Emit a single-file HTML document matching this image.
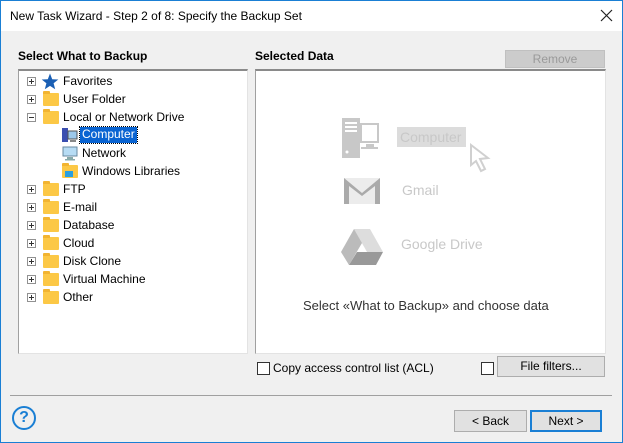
<!DOCTYPE html>
<html><head><style>
*{margin:0;padding:0;box-sizing:border-box}
body{width:623px;height:443px;overflow:hidden;background:#f0f0f0;font-family:"Liberation Sans",sans-serif;font-size:12px;color:#000;position:relative}
.win{position:absolute;left:0;top:0;width:623px;height:443px;border:1px solid #1a7fd4}
.title{position:absolute;left:1px;top:1px;width:621px;height:30px;background:#fff}
.title span{position:absolute;left:9px;top:8px;font-size:12px}
.abs{position:absolute}
.box{position:absolute;background:#fff;border:1px solid #a0a0a0;border-right-color:#e3e3e3;border-bottom-color:#e3e3e3;border-top:2px solid #8a8a8a}
.row{position:absolute;left:0;height:18px;line-height:18px;white-space:nowrap}
.pm{position:absolute;left:27px;top:5px;width:9px;height:9px;border:1px solid #919191;background:#fff}
.pm:before{content:"";position:absolute;left:1px;top:3px;width:5px;height:1px;background:#333}
.pm.p:after{content:"";position:absolute;left:3px;top:1px;width:1px;height:5px;background:#333}
.fold{position:absolute;top:3px;width:16px;height:13px;background:#fcc846;border-radius:1px}
.fold:before{content:"";position:absolute;left:0;top:-2px;width:7px;height:3px;background:#f2b431;border-radius:1px 1px 0 0}
.btn{position:absolute;background:#e1e1e1;border:1px solid #adadad;text-align:center;font-size:12px}
.cb{position:absolute;width:13px;height:13px;border:1px solid #333;background:#fff}
.g{color:#c8c8c8;font-size:14px}
</style></head><body>
<div class="win"></div>
<div class="title"><span>New Task Wizard - Step 2 of 8: Specify the Backup Set</span>
<svg class="abs" style="left:599px;top:8px" width="13" height="13"><path d="M1 1L12 12M12 1L1 12" stroke="#222" stroke-width="1.2"/></svg></div>

<div class="abs" style="left:18px;top:49px;font-weight:bold">Select What to Backup</div>
<div class="abs" style="left:255px;top:49px;font-weight:bold">Selected Data</div>
<div class="btn" style="left:505px;top:50px;width:100px;height:18px;line-height:16px;color:#9a9a9a;background:#ccc;border-color:#c0c0c0">Remove</div>

<div class="box" style="left:18px;top:69px;width:230px;height:285px"></div>
<div class="box" style="left:255px;top:69px;width:351px;height:285px"></div>

<div class="abs" style="left:0;top:72px;width:248px">
 <div class="row" style="top:0"><div class="pm p"></div>
  <svg class="abs" style="left:41px;top:1px" width="18" height="17"><path d="M9 0.5L11.2 6.2L17.3 6.5L12.6 10.3L14.2 16.3L9 12.9L3.8 16.3L5.4 10.3L0.7 6.5L6.8 6.2Z" fill="#1a5fb4"/></svg>
  <span class="abs" style="left:63px">Favorites</span></div>
 <div class="row" style="top:18px"><div class="pm p"></div><div class="fold" style="left:43px"></div><span class="abs" style="left:63px">User Folder</span></div>
 <div class="row" style="top:36px"><div class="pm"></div><div class="fold" style="left:43px"></div><span class="abs" style="left:63px">Local or Network Drive</span></div>
 <div class="row" style="top:54px">
  <svg class="abs" style="left:62px;top:2px" width="16" height="15"><rect x="0" y="0" width="6" height="14" fill="#3b4fb0"/><rect x="6" y="3" width="9" height="8" fill="#9cc8ea" stroke="#555"/><rect x="8" y="12" width="6" height="2" fill="#888"/></svg>
  <span class="abs" style="left:80px;top:1px;height:16px;line-height:15px;padding:0 2px;background:#0a64d2;color:#fff;outline:1px dotted #000">Computer</span></div>
 <div class="row" style="top:72px"><svg class="abs" style="left:62px;top:2px" width="16" height="15"><rect x="1" y="1" width="14" height="9" fill="#b7dcf4" stroke="#6a8aa0"/><rect x="5" y="11" width="6" height="2" fill="#8aa"/><rect x="3" y="13" width="10" height="1.5" fill="#8aa"/></svg><span class="abs" style="left:82px">Network</span></div>
 <div class="row" style="top:90px"><div class="fold" style="left:62px"></div><div class="abs" style="left:65px;top:9px;width:8px;height:6px;background:#2a9fe0"></div><span class="abs" style="left:82px">Windows Libraries</span></div>
 <div class="row" style="top:108px"><div class="pm p"></div><div class="fold" style="left:43px"></div><span class="abs" style="left:63px">FTP</span></div>
 <div class="row" style="top:126px"><div class="pm p"></div><div class="fold" style="left:43px"></div><span class="abs" style="left:63px">E-mail</span></div>
 <div class="row" style="top:144px"><div class="pm p"></div><div class="fold" style="left:43px"></div><span class="abs" style="left:63px">Database</span></div>
 <div class="row" style="top:162px"><div class="pm p"></div><div class="fold" style="left:43px"></div><span class="abs" style="left:63px">Cloud</span></div>
 <div class="row" style="top:180px"><div class="pm p"></div><div class="fold" style="left:43px"></div><span class="abs" style="left:63px">Disk Clone</span></div>
 <div class="row" style="top:198px"><div class="pm p"></div><div class="fold" style="left:43px"></div><span class="abs" style="left:63px">Virtual Machine</span></div>
 <div class="row" style="top:216px"><div class="pm p"></div><div class="fold" style="left:43px"></div><span class="abs" style="left:63px">Other</span></div>
</div>

<svg class="abs" style="left:341px;top:116px" width="40" height="44"><rect x="1" y="2" width="18" height="40" fill="#c8c8c8"/><g fill="#fff"><rect x="4" y="6" width="12" height="2"/><rect x="4" y="10" width="12" height="2"/><rect x="4" y="14" width="12" height="2"/><circle cx="6" cy="36" r="1.5"/></g><rect x="20" y="8" width="17" height="18" fill="#fff" stroke="#c8c8c8" stroke-width="2"/><rect x="25" y="28" width="8" height="3" fill="#c8c8c8"/><rect x="20" y="31" width="17" height="2" fill="#c8c8c8"/></svg>
<div class="abs g" style="left:397px;top:127px;width:69px;height:20px;background:#dcdcdc;padding-left:3px;line-height:20px">Computer</div>
<svg class="abs" style="left:469px;top:143px" width="26" height="32"><path d="M2 2L2 22L7 18L12 28L16 26L11 16L19 15Z" fill="#fff" stroke="#d0d0d0" stroke-width="2"/></svg>
<svg class="abs" style="left:343px;top:177px" width="38" height="28"><rect x="1" y="1" width="36" height="26" fill="#ececec"/><path d="M1 1L19 16L37 1V27H32V9L19 19L6 9V27H1Z" fill="#aaa"/></svg>
<div class="abs g" style="left:402px;top:182px">Gmail</div>
<svg class="abs" style="left:340px;top:228px" width="44" height="38"><path d="M14 1H30L43 24H27Z" fill="#ddd"/><path d="M14 1L22 15L9 37L1 24Z" fill="#bbb"/><path d="M9 37H36L43 24H17Z" fill="#999"/></svg>
<div class="abs g" style="left:401px;top:236px">Google Drive</div>
<div class="abs" style="left:303px;top:298px;font-size:13px;color:#333">Select «What to Backup» and choose data</div>

<div class="cb" style="left:257px;top:362px"></div>
<div class="abs" style="left:273px;top:361px">Copy access control list (ACL)</div>
<div class="cb" style="left:481px;top:362px"></div>
<div class="btn" style="left:497px;top:356px;width:108px;height:21px;line-height:19px">File filters...</div>

<div class="abs" style="left:10px;top:395px;width:602px;height:1px;background:#a0a0a0"></div>
<div class="abs" style="left:12px;top:406px;width:24px;height:24px;border:2px solid #1a7fd4;border-radius:50%;color:#1a7fd4;font-weight:bold;font-size:16px;text-align:center;line-height:20px">?</div>
<div class="btn" style="left:454px;top:410px;width:73px;height:22px;line-height:20px">&lt; Back</div>
<div class="btn" style="left:530px;top:410px;width:72px;height:22px;line-height:18px;border:2px solid #1a7fd4">Next &gt;</div>
</body></html>
